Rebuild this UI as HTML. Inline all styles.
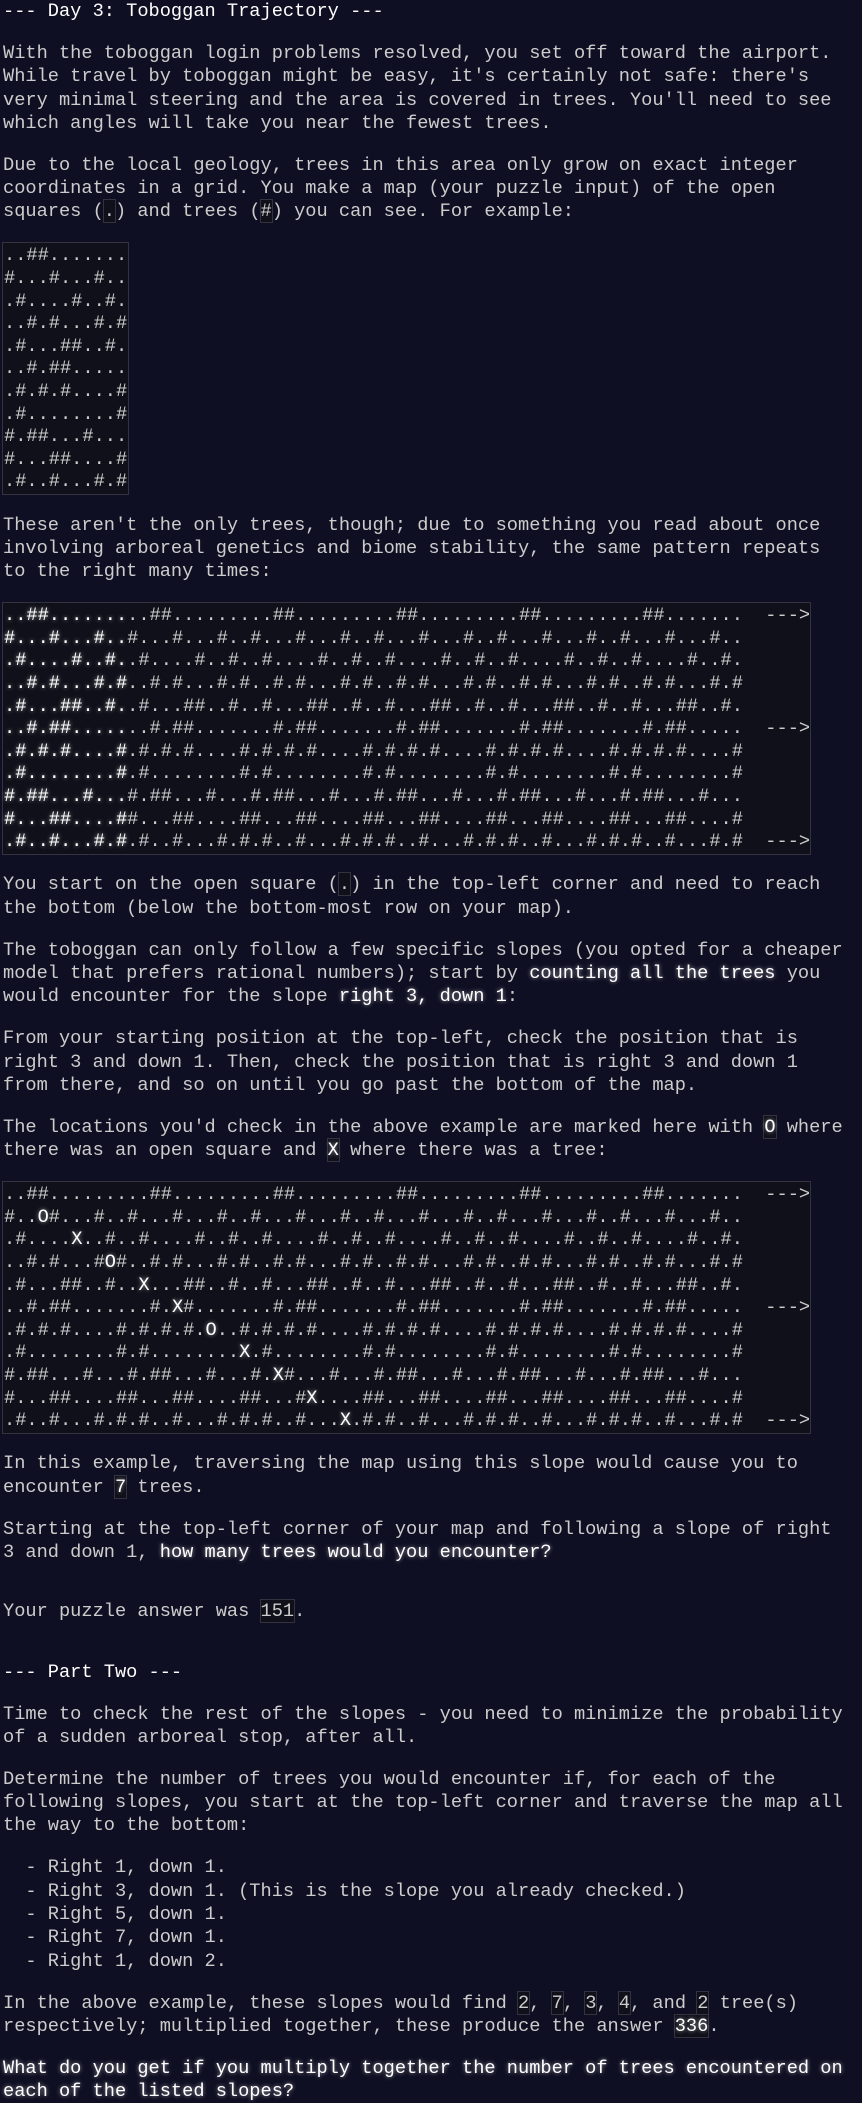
<!DOCTYPE html>
<html><head><meta charset="utf-8"><style>
html,body{margin:0;padding:0;background:#0f0f23;}
body{color:#cccccc;font-family:"Liberation Mono","DejaVu Sans Mono",monospace;font-size:18.67px;line-height:23.3px;width:862px;height:2101px;overflow:hidden;}
article{padding-left:3px;width:842px;}
h2{color:#ffffff;font-size:18.67px;font-weight:normal;margin:0 0 16px 0;}
p{margin:18.7px 0;}
pre{margin:18.7px 0 18.7px -1px;font-family:inherit;font-size:18.67px;line-height:22.6px;background:#10101a;border:1px solid #333340;padding:1px;display:block;width:fit-content;}
.pw{width:805px;}
code{font-family:inherit;}
p code{background:#10101a;box-shadow:0 0 0 1px #333340;padding:0;}
em{font-style:normal;color:#ffffff;text-shadow:0 0 4px rgba(255,255,255,0.6);}
.gap1{margin-top:36px;}
.gap2{margin-top:37px;margin-bottom:18px;}
.li{white-space:pre;margin:0;}
</style></head><body><article>
<h2>--- Day 3: Toboggan Trajectory ---</h2>
<p>With the toboggan login problems resolved, you set off toward the airport. While travel by toboggan might be easy, it's certainly not safe: there's very minimal steering and the area is covered in trees. You'll need to see which angles will take you near the fewest trees.</p>
<p>Due to the local geology, trees in this area only grow on exact integer coordinates in a grid. You make a map (your puzzle input) of the open squares (<code>.</code>) and trees (<code>#</code>) you can see. For example:</p>
<pre>..##.......
#...#...#..
.#....#..#.
..#.#...#.#
.#...##..#.
..#.##.....
.#.#.#....#
.#........#
#.##...#...
#...##....#
.#..#...#.#</pre>
<p>These aren't the only trees, though; due to something you read about once involving arboreal genetics and biome stability, the same pattern repeats to the right many times:</p>
<pre class="pw"><em>..##.......</em>..##.........##.........##.........##.........##.......  ---&gt;
<em>#...#...#..</em>#...#...#..#...#...#..#...#...#..#...#...#..#...#...#..
<em>.#....#..#.</em>.#....#..#..#....#..#..#....#..#..#....#..#..#....#..#.
<em>..#.#...#.#</em>..#.#...#.#..#.#...#.#..#.#...#.#..#.#...#.#..#.#...#.#
<em>.#...##..#.</em>.#...##..#..#...##..#..#...##..#..#...##..#..#...##..#.
<em>..#.##.....</em>..#.##.......#.##.......#.##.......#.##.......#.##.....  ---&gt;
<em>.#.#.#....#</em>.#.#.#....#.#.#.#....#.#.#.#....#.#.#.#....#.#.#.#....#
<em>.#........#</em>.#........#.#........#.#........#.#........#.#........#
<em>#.##...#...</em>#.##...#...#.##...#...#.##...#...#.##...#...#.##...#...
<em>#...##....#</em>#...##....##...##....##...##....##...##....##...##....#
<em>.#..#...#.#</em>.#..#...#.#.#..#...#.#.#..#...#.#.#..#...#.#.#..#...#.#  ---&gt;</pre>
<p>You start on the open square (<code>.</code>) in the top-left corner and need to reach the bottom (below the bottom-most row on your map).</p>
<p>The toboggan can only follow a few specific slopes (you opted for a cheaper model that prefers rational numbers); start by <em>counting all the trees</em> you would encounter for the slope <em>right 3, down 1</em>:</p>
<p>From your starting position at the top-left, check the position that is right 3 and down 1. Then, check the position that is right 3 and down 1 from there, and so on until you go past the bottom of the map.</p>
<p>The locations you'd check in the above example are marked here with <code><em>O</em></code> where there was an open square and <code><em>X</em></code> where there was a tree:</p>
<pre class="pw">..##.........##.........##.........##.........##.........##.......  ---&gt;
#..<em>O</em>#...#..#...#...#..#...#...#..#...#...#..#...#...#..#...#...#..
.#....<em>X</em>..#..#....#..#..#....#..#..#....#..#..#....#..#..#....#..#.
..#.#...#<em>O</em>#..#.#...#.#..#.#...#.#..#.#...#.#..#.#...#.#..#.#...#.#
.#...##..#..<em>X</em>...##..#..#...##..#..#...##..#..#...##..#..#...##..#.
..#.##.......#.<em>X</em>#.......#.##.......#.##.......#.##.......#.##.....  ---&gt;
.#.#.#....#.#.#.#.<em>O</em>..#.#.#.#....#.#.#.#....#.#.#.#....#.#.#.#....#
.#........#.#........<em>X</em>.#........#.#........#.#........#.#........#
#.##...#...#.##...#...#.<em>X</em>#...#...#.##...#...#.##...#...#.##...#...
#...##....##...##....##...#<em>X</em>....##...##....##...##....##...##....#
.#..#...#.#.#..#...#.#.#..#...<em>X</em>.#.#..#...#.#.#..#...#.#.#..#...#.#  ---&gt;</pre>
<p>In this example, traversing the map using this slope would cause you to encounter <code><em>7</em></code> trees.</p>
<p>Starting at the top-left corner of your map and following a slope of right 3 and down 1, <em>how many trees would you encounter?</em></p>
</article>
<p class="gap1" style="padding-left:3px">Your puzzle answer was <code>151</code>.</p>
<article>
<h2 class="gap2">--- Part Two ---</h2>
<p>Time to check the rest of the slopes - you need to minimize the probability of a sudden arboreal stop, after all.</p>
<p>Determine the number of trees you would encounter if, for each of the following slopes, you start at the top-left corner and traverse the map all the way to the bottom:</p>
<div class="li">  - Right 1, down 1.
  - Right 3, down 1. (This is the slope you already checked.)
  - Right 5, down 1.
  - Right 7, down 1.
  - Right 1, down 2.</div>
<p>In the above example, these slopes would find <code>2</code>, <code>7</code>, <code>3</code>, <code>4</code>, and <code>2</code> tree(s) respectively; multiplied together, these produce the answer <code><em>336</em></code>.</p>
<p><em>What do you get if you multiply together the number of trees encountered on each of the listed slopes?</em></p>
</article>
</body></html>
